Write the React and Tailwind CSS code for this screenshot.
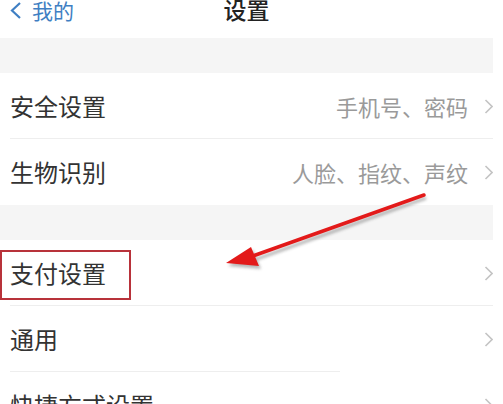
import React from 'react'

const font = { fontFamily: '"Noto Sans CJK SC", "Noto Sans", sans-serif' }

function Chevron() {
  return (
    <svg width="9" height="15" viewBox="0 0 9 15" className="shrink-0">
      <polyline points="1.5,1 8,7.5 1.5,14" fill="none" stroke="#c4c4c4" strokeWidth="1.6" />
    </svg>
  )
}

function Row({ title, detail, divider = true, dividerWidth = 'w-[483px]', children }) {
  return (
    <div className="relative h-[66px] bg-white">
      <div className="flex h-full items-center pl-[10px]">
        <div className="flex-1 text-[24px] leading-none text-[#333]">{title}</div>
        {detail && <div className="mr-[16px] text-[22px] leading-none text-[#9a9a9a]">{detail}</div>}
        <Chevron />
      </div>
      {divider && <div className={`ml-[10px] h-px ${dividerWidth} bg-[#eeeeee] -mt-px`} />}
      {children}
    </div>
  )
}

export default function App() {
  return (
    <div className="relative h-[404px] w-[503px] overflow-hidden bg-white" style={font}>
      <div className="w-[493px]">
        <div className="flex h-[38px] items-start bg-white">
          <div className="flex w-[120px] items-center pl-[9px] pt-[1px] text-[#3f7fc3]">
            <svg width="13" height="19" viewBox="0 0 13 19">
              <polyline points="11,2 3,9.5 11,17" fill="none" stroke="#3f7fc3" strokeWidth="2.2" />
            </svg>
            <span className="ml-[10px] text-[21px] leading-[17px]">我的</span>
          </div>
          <div className="w-[253px] pt-[1px] text-center text-[23px] font-medium leading-[17px] text-[#222]">设置</div>
        </div>

        <div className="h-[35px] bg-[#f5f5f5]" />

        <Row title="安全设置" detail="手机号、密码" />
        <Row title="生物识别" detail="人脸、指纹、声纹" divider={false} />

        <div className="h-[35px] bg-[#f5f5f5]" />

        <Row title="支付设置">
          <div className="absolute left-0 top-[10px] h-[50px] w-[131px] border-2 border-[#b8323a]" />
        </Row>
        <Row title="通用" dividerWidth="w-[330px]" />
        <Row title="快捷方式设置" divider={false} />
      </div>

      <svg className="pointer-events-none absolute left-0 top-0" width="503" height="404" viewBox="0 0 503 404">
        <defs>
          <filter id="sh" x="-20%" y="-20%" width="140%" height="140%">
            <feGaussianBlur stdDeviation="1.5" />
          </filter>
        </defs>
        <g transform="translate(2,3)" filter="url(#sh)" opacity="0.35">
          <line x1="424" y1="195" x2="252" y2="257" stroke="#333" strokeWidth="3" />
          <polygon points="226,263 251,247 259,266" fill="#333" />
        </g>
        <line x1="424" y1="195" x2="250" y2="257" stroke="#e31a1a" strokeWidth="3.5" strokeLinecap="round" />
        <polygon points="226,263 251,247 259,266" fill="#e31a1a" />
      </svg>
    </div>
  )
}
